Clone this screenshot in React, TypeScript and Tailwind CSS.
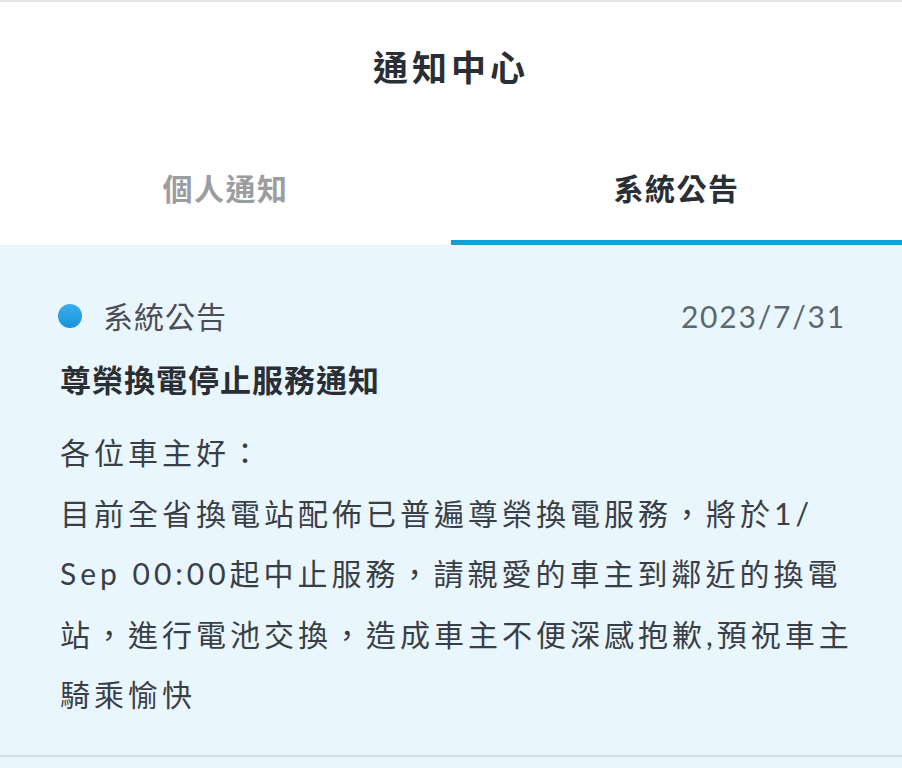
import React from "react";

const font = { fontFamily: "Lato, 'Noto Sans CJK TC', 'Noto Sans', sans-serif" };

export default function App() {
  return (
    <div className="w-[902px] h-[768px] overflow-hidden bg-white flex flex-col" style={font}>
      <div className="h-[2px] bg-[#e2e2e2]" />
      <div className="h-[132px] flex items-center justify-center">
        <h1 className="text-[35px] font-bold text-[#2a2e35] tracking-[4px] leading-none mt-[-1px]">通知中心</h1>
      </div>
      <div className="flex h-[111px]">
        <div className="flex-1 flex flex-col">
          <div className="flex-1 flex items-center justify-center text-[30px] font-bold text-[#9b9da1] leading-none tracking-[1.5px] pt-[2px]">個人通知</div>
          <div className="h-[5px]" />
        </div>
        <div className="flex-1 flex flex-col">
          <div className="flex-1 flex items-center justify-center text-[30px] font-bold text-[#2a2e35] leading-none tracking-[1.5px] pt-[2px]">系統公告</div>
          <div className="h-[5px] bg-[#1b9ad6]" />
        </div>
      </div>
      <div className="bg-[#eaf6fd] flex-1 flex flex-col">
        <div className="pl-[58px] pr-[56px] pt-[53px] pb-[30px] border-b-2 border-[#d3e1e7]">
          <div className="flex items-center justify-between h-[36px]">
            <div className="flex items-center">
              <span className="w-[24px] h-[24px] rounded-full bg-gradient-to-b from-[#3aaef0] to-[#1692d8] inline-block" />
              <span className="ml-[21px] text-[30px] text-[#4c4d57] leading-none tracking-[1px]">系統公告</span>
            </div>
            <span className="text-[30px] text-[#5c6870] leading-none tracking-[1.8px]">2023/7/31</span>
          </div>
          <div className="mt-[31px] pl-[2px] text-[31px] font-bold text-[#2a2e35] leading-none tracking-[1px]">尊榮換電停止服務通知</div>
          <div className="mt-[26px] pl-[2px] text-[30px] text-[#3a3f47] leading-[60.5px] tracking-[4px] whitespace-nowrap">
            各位車主好：<br />
            目前全省換電站配佈已普遍尊榮換電服務，將於1/<br />
            Sep 00:00起中止服務，請親愛的車主到鄰近的換電<br />
            站，進行電池交換，造成車主不便深感抱歉,預祝車主<br />
            騎乘愉快
          </div>
        </div>
      </div>
    </div>
  );
}
